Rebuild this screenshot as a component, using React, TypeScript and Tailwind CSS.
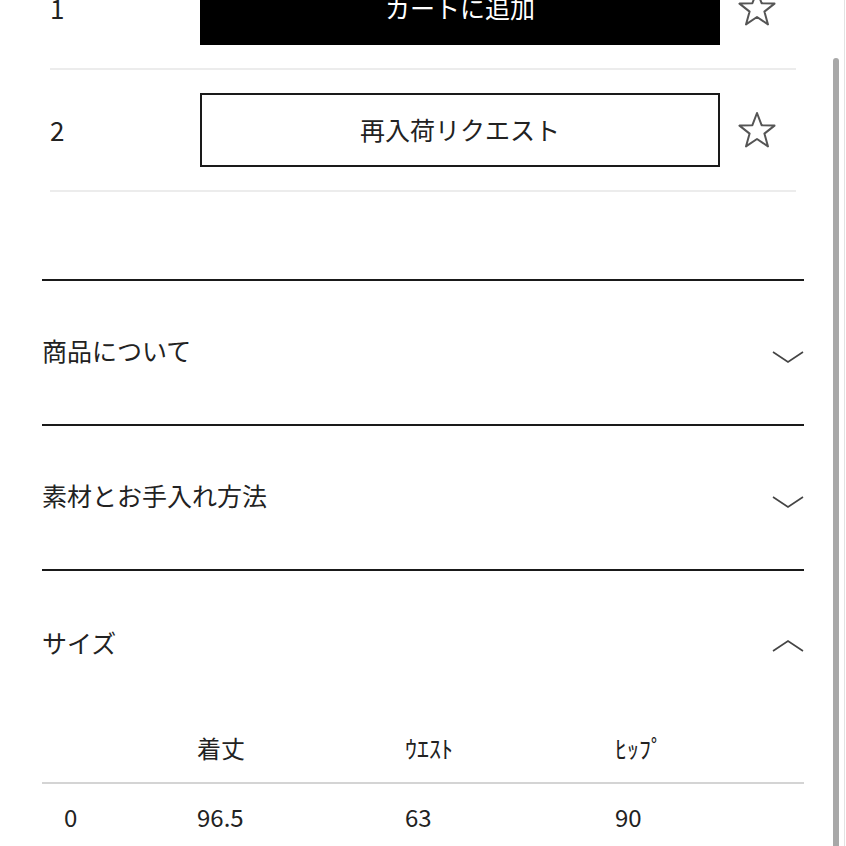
import React from "react";

const StarIcon = () => (
	<svg width="40" height="38" viewBox="0 0 40 38" fill="none">
		<polygon
			points="20,2 24.6,14.2 37.5,14.6 27.4,22.6 31,35.4 20,28 9,35.4 12.6,22.6 2.5,14.6 15.4,14.2"
			stroke="#555"
			strokeWidth={2}
			strokeLinejoin="round"
		/>
	</svg>
);

const Chevron = ({ up }: { up?: boolean }) => (
	<svg width="32" height="12" viewBox="0 0 32 12" fill="none">
		<polyline
			points={up ? "1,11 16,1 31,11" : "1,1 16,11 31,1"}
			stroke="#444"
			strokeWidth={1.6}
		/>
	</svg>
);

const rows = [
	{ no: "1", label: "カートに追加", dark: true },
	{ no: "2", label: "再入荷リクエスト", dark: false },
];

const sections = ["商品について", "素材とお手入れ方法"];

export default function App() {
	return (
		<div
			className="relative w-[846px] h-[846px] overflow-hidden bg-white text-[#222]"
			style={{ fontFamily: '"Noto Sans CJK JP", "Noto Sans", sans-serif' }}
		>
			<div className="-mt-[52px] px-[42px]">
				{/* 在庫行 */}
				<div className="px-2">
					{rows.map((row) => (
						<div key={row.no}>
							<div className="flex items-center py-[23px]">
								<span className="w-[150px] text-[26px] leading-none">{row.no}</span>
								<div
									className={
										row.dark
											? "w-[520px] h-[74px] flex items-center justify-center bg-black text-white text-[25px]"
											: "w-[520px] h-[74px] flex items-center justify-center border-2 border-[#1a1a1a] text-[25px]"
									}
								>
									{row.label}
								</div>
								<div className="ml-[17px]">
									<StarIcon />
								</div>
							</div>
							<div className="h-[2px] bg-[#ececec]" />
						</div>
					))}
				</div>

				{/* アコーディオン */}
				<div className="mt-[87px]">
					{sections.map((title) => (
						<div key={title} className="border-t-2 border-[#1a1a1a]">
							<div className="h-[143px] flex items-center justify-between">
								<span className="text-[25px] leading-none -mt-1">{title}</span>
								<span className="mt-2">
									<Chevron />
								</span>
							</div>
						</div>
					))}
					<div className="border-t-2 border-[#1a1a1a]">
						<div className="h-[142px] flex items-center justify-between">
							<span className="text-[25px] leading-none">サイズ</span>
							<span className="mt-2">
								<Chevron up />
							</span>
						</div>
						<div className="grid grid-cols-[155px_208px_210px_1fr] h-[69px] items-center text-[24px] leading-none">
							<span />
							<span>着丈</span>
							<span>ｳｴｽﾄ</span>
							<span>ﾋｯﾌﾟ</span>
						</div>
						<div className="h-[2px] bg-[#d4d4d4]" />
						<div className="grid grid-cols-[155px_208px_210px_1fr] h-[66px] items-center text-[24px] leading-none">
							<span className="pl-[22px]">0</span>
							<span>96.5</span>
							<span>63</span>
							<span>90</span>
						</div>
					</div>
				</div>
			</div>

			{/* スクロールバー */}
			<div className="absolute right-[7px] top-[58px] bottom-0 w-[6px] rounded-t-full bg-[#a8a8a8]" />
			<div className="absolute right-[1px] top-0 bottom-0 w-px bg-[#e2e2e2]" />
		</div>
	);
}
